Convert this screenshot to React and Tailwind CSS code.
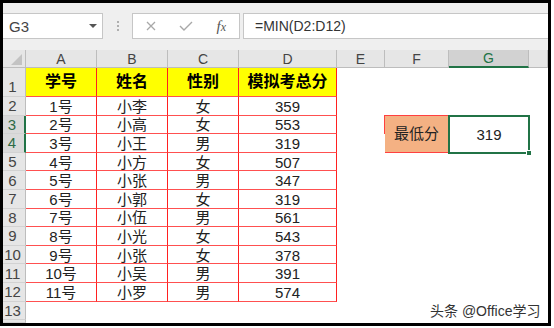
import React from "react";

const rows = [
  ["1号", "小李", "女", 359],
  ["2号", "小高", "女", 553],
  ["3号", "小王", "男", 319],
  ["4号", "小方", "女", 507],
  ["5号", "小张", "男", 347],
  ["6号", "小郭", "女", 319],
  ["7号", "小伍", "男", 561],
  ["8号", "小光", "女", 543],
  ["9号", "小张", "女", 378],
  ["10号", "小吴", "男", 391],
  ["11号", "小罗", "男", 574],
];

const colHeads = ["A", "B", "C", "D", "E", "F", "G", ""];

function RowHead({ n, selected, tall }) {
  return (
    <div
      className={
        "flex justify-center pr-[3px] text-[15px] leading-none border-b border-b-[#d2d2d2] " +
        (tall ? "items-end pb-[2px] " : "items-center ") +
        (selected
          ? "bg-[#dadada] text-[#2f6b45] border-r-2 border-r-[#217346]"
          : "bg-[#e6e6e6] text-[#444] border-r border-r-[#bdbdbd]")
      }
    >
      {n}
    </div>
  );
}

function TCell({ children, head }) {
  return (
    <div
      className={
        "flex items-center justify-center leading-none border-r border-r-[#ff2020] border-b border-b-[#ff5050] " +
        (head ? "bg-[#ffff00] text-[16px] font-bold text-black" : "bg-white text-[15px] text-[#222] pt-[1px]")
      }
    >
      {children}
    </div>
  );
}

function Blank() {
  return <div className="bg-white" />;
}

export default function App() {
  const cells = [];
  // column header row
  cells.push(
    <div key="corner" className="bg-[#e6e6e6] border-r border-r-[#bdbdbd] border-b border-b-[#bdbdbd] relative">
      <svg className="absolute left-[8px] top-[4px]" width="11" height="11" viewBox="0 0 11 11">
        <polygon points="0,11 11,0 11,11" fill="#c3c3c3" />
      </svg>
    </div>
  );
  colHeads.forEach((c, i) => {
    const sel = c === "G";
    cells.push(
      <div
        key={"ch" + i}
        className={
          "flex items-center justify-center text-[14px] leading-none " +
          (sel
            ? "bg-[#d2d2d2] text-[#217346] border-r border-r-[#bdbdbd] border-b-2 border-b-[#217346]"
            : "bg-[#e6e6e6] text-[#444] border-r border-r-[#bdbdbd] border-b border-b-[#bdbdbd]")
        }
      >
        {c}
      </div>
    );
  });

  // row 1 header
  cells.push(<RowHead key="rh1" n={1} tall />);
  ["学号", "姓名", "性别", "模拟考总分"].forEach((t, i) => cells.push(<TCell key={"h" + i} head>{t}</TCell>));
  for (let i = 0; i < 4; i++) cells.push(<Blank key={"b1" + i} />);

  rows.forEach((r, idx) => {
    const n = idx + 2;
    cells.push(<RowHead key={"rh" + n} n={n} selected={n === 3 || n === 4} />);
    r.forEach((v, j) => cells.push(<TCell key={n + "-" + j}>{v}</TCell>));
    if (n === 3) {
      cells.push(<Blank key={n + "e"} />);
      cells.push(
        <div
          key="minlabel"
          className="row-span-2 bg-[#f4b183] border border-[#ff4040] flex items-center justify-center text-[15px] text-[#222] leading-none -ml-px -mt-px"
        >
          最低分
        </div>
      );
      cells.push(
        <div key="minval" className="row-span-2 bg-white relative flex items-center justify-center text-[15px] text-[#222] leading-none">
          319
          <div className="absolute -left-[1px] -top-[1px] -right-[1px] -bottom-[1px] border-2 border-[#217346]" />
          <div className="absolute -right-[3px] -bottom-[3px] w-[6px] h-[6px] bg-[#217346] border border-white" />
        </div>
      );
      cells.push(<Blank key={n + "h"} />);
    } else if (n === 4) {
      cells.push(<Blank key={n + "e"} />);
      cells.push(<Blank key={n + "h"} />);
    } else {
      for (let i = 0; i < 4; i++) cells.push(<Blank key={n + "b" + i} />);
    }
  });

  cells.push(<RowHead key="rh13" n={13} />);
  for (let i = 0; i < 8; i++) cells.push(<Blank key={"b13" + i} />);
  cells.push(<RowHead key="rh14" n="" />);
  for (let i = 0; i < 8; i++) cells.push(<Blank key={"b14" + i} />);

  return (
    <div className="relative w-[554px] h-[328px] bg-white overflow-hidden font-['Liberation_Sans','Noto_Sans_CJK_SC',sans-serif]">
      <div className="w-[551px] h-[326px] border-[3px] border-black flex flex-col overflow-hidden bg-white">
        {/* formula bar */}
        <div className="h-[47px] shrink-0 bg-[#efefef] flex items-start pt-[10px]">
          <div className="w-[100px] h-[26px] bg-white border border-[#c6c6c6] border-l-0 flex items-center justify-between pl-[6px] pr-[5px]">
            <span className="text-[15px] text-[#444] leading-none">G3</span>
            <svg width="8" height="4" viewBox="0 0 8 4">
              <polygon points="0,0 8,0 4,4" fill="#555" />
            </svg>
          </div>
          <div className="w-[29px] h-[26px] flex flex-col items-center justify-center gap-[2px]">
            <span className="w-[2px] h-[2px] bg-[#9a9a9a] rounded-full" />
            <span className="w-[2px] h-[2px] bg-[#9a9a9a] rounded-full" />
            <span className="w-[2px] h-[2px] bg-[#9a9a9a] rounded-full" />
          </div>
          <div className="w-[108px] h-[26px] bg-white border border-[#c6c6c6] flex items-center">
            <div className="w-[36px] flex justify-center">
              <svg width="10" height="10" viewBox="0 0 10 10">
                <path d="M1 1 L9 9 M9 1 L1 9" stroke="#a8a8a8" strokeWidth="1.3" fill="none" />
              </svg>
            </div>
            <div className="w-[36px] flex justify-center">
              <svg width="14" height="10" viewBox="0 0 14 10">
                <path d="M1 5 L5 9 L13 1" stroke="#a8a8a8" strokeWidth="1.4" fill="none" />
              </svg>
            </div>
            <div className="w-[36px] flex justify-center items-center">
              <span className="font-['Liberation_Serif',serif] italic text-[15px] text-[#555] leading-none">
                f<span className="text-[12px]">x</span>
              </span>
            </div>
          </div>
          <div className="flex-1 ml-[3px] h-[26px] bg-white border border-[#c6c6c6] border-r-0 flex items-center pl-[11px]">
            <span className="text-[14px] text-[#333] leading-none">=MIN(D2:D12)</span>
          </div>
        </div>
        {/* sheet */}
        <div className="flex-1 grid grid-cols-[23px_71px_71px_71px_98px_48px_64px_80px_1fr] grid-rows-[18px_29px_repeat(12,18.6px)_1fr]">
          {cells}
        </div>
      </div>
      <div className="absolute left-[430px] top-[303px] text-[14px] leading-[16px] text-[#333] whitespace-nowrap">
        头条 @Office学习
      </div>
    </div>
  );
}
